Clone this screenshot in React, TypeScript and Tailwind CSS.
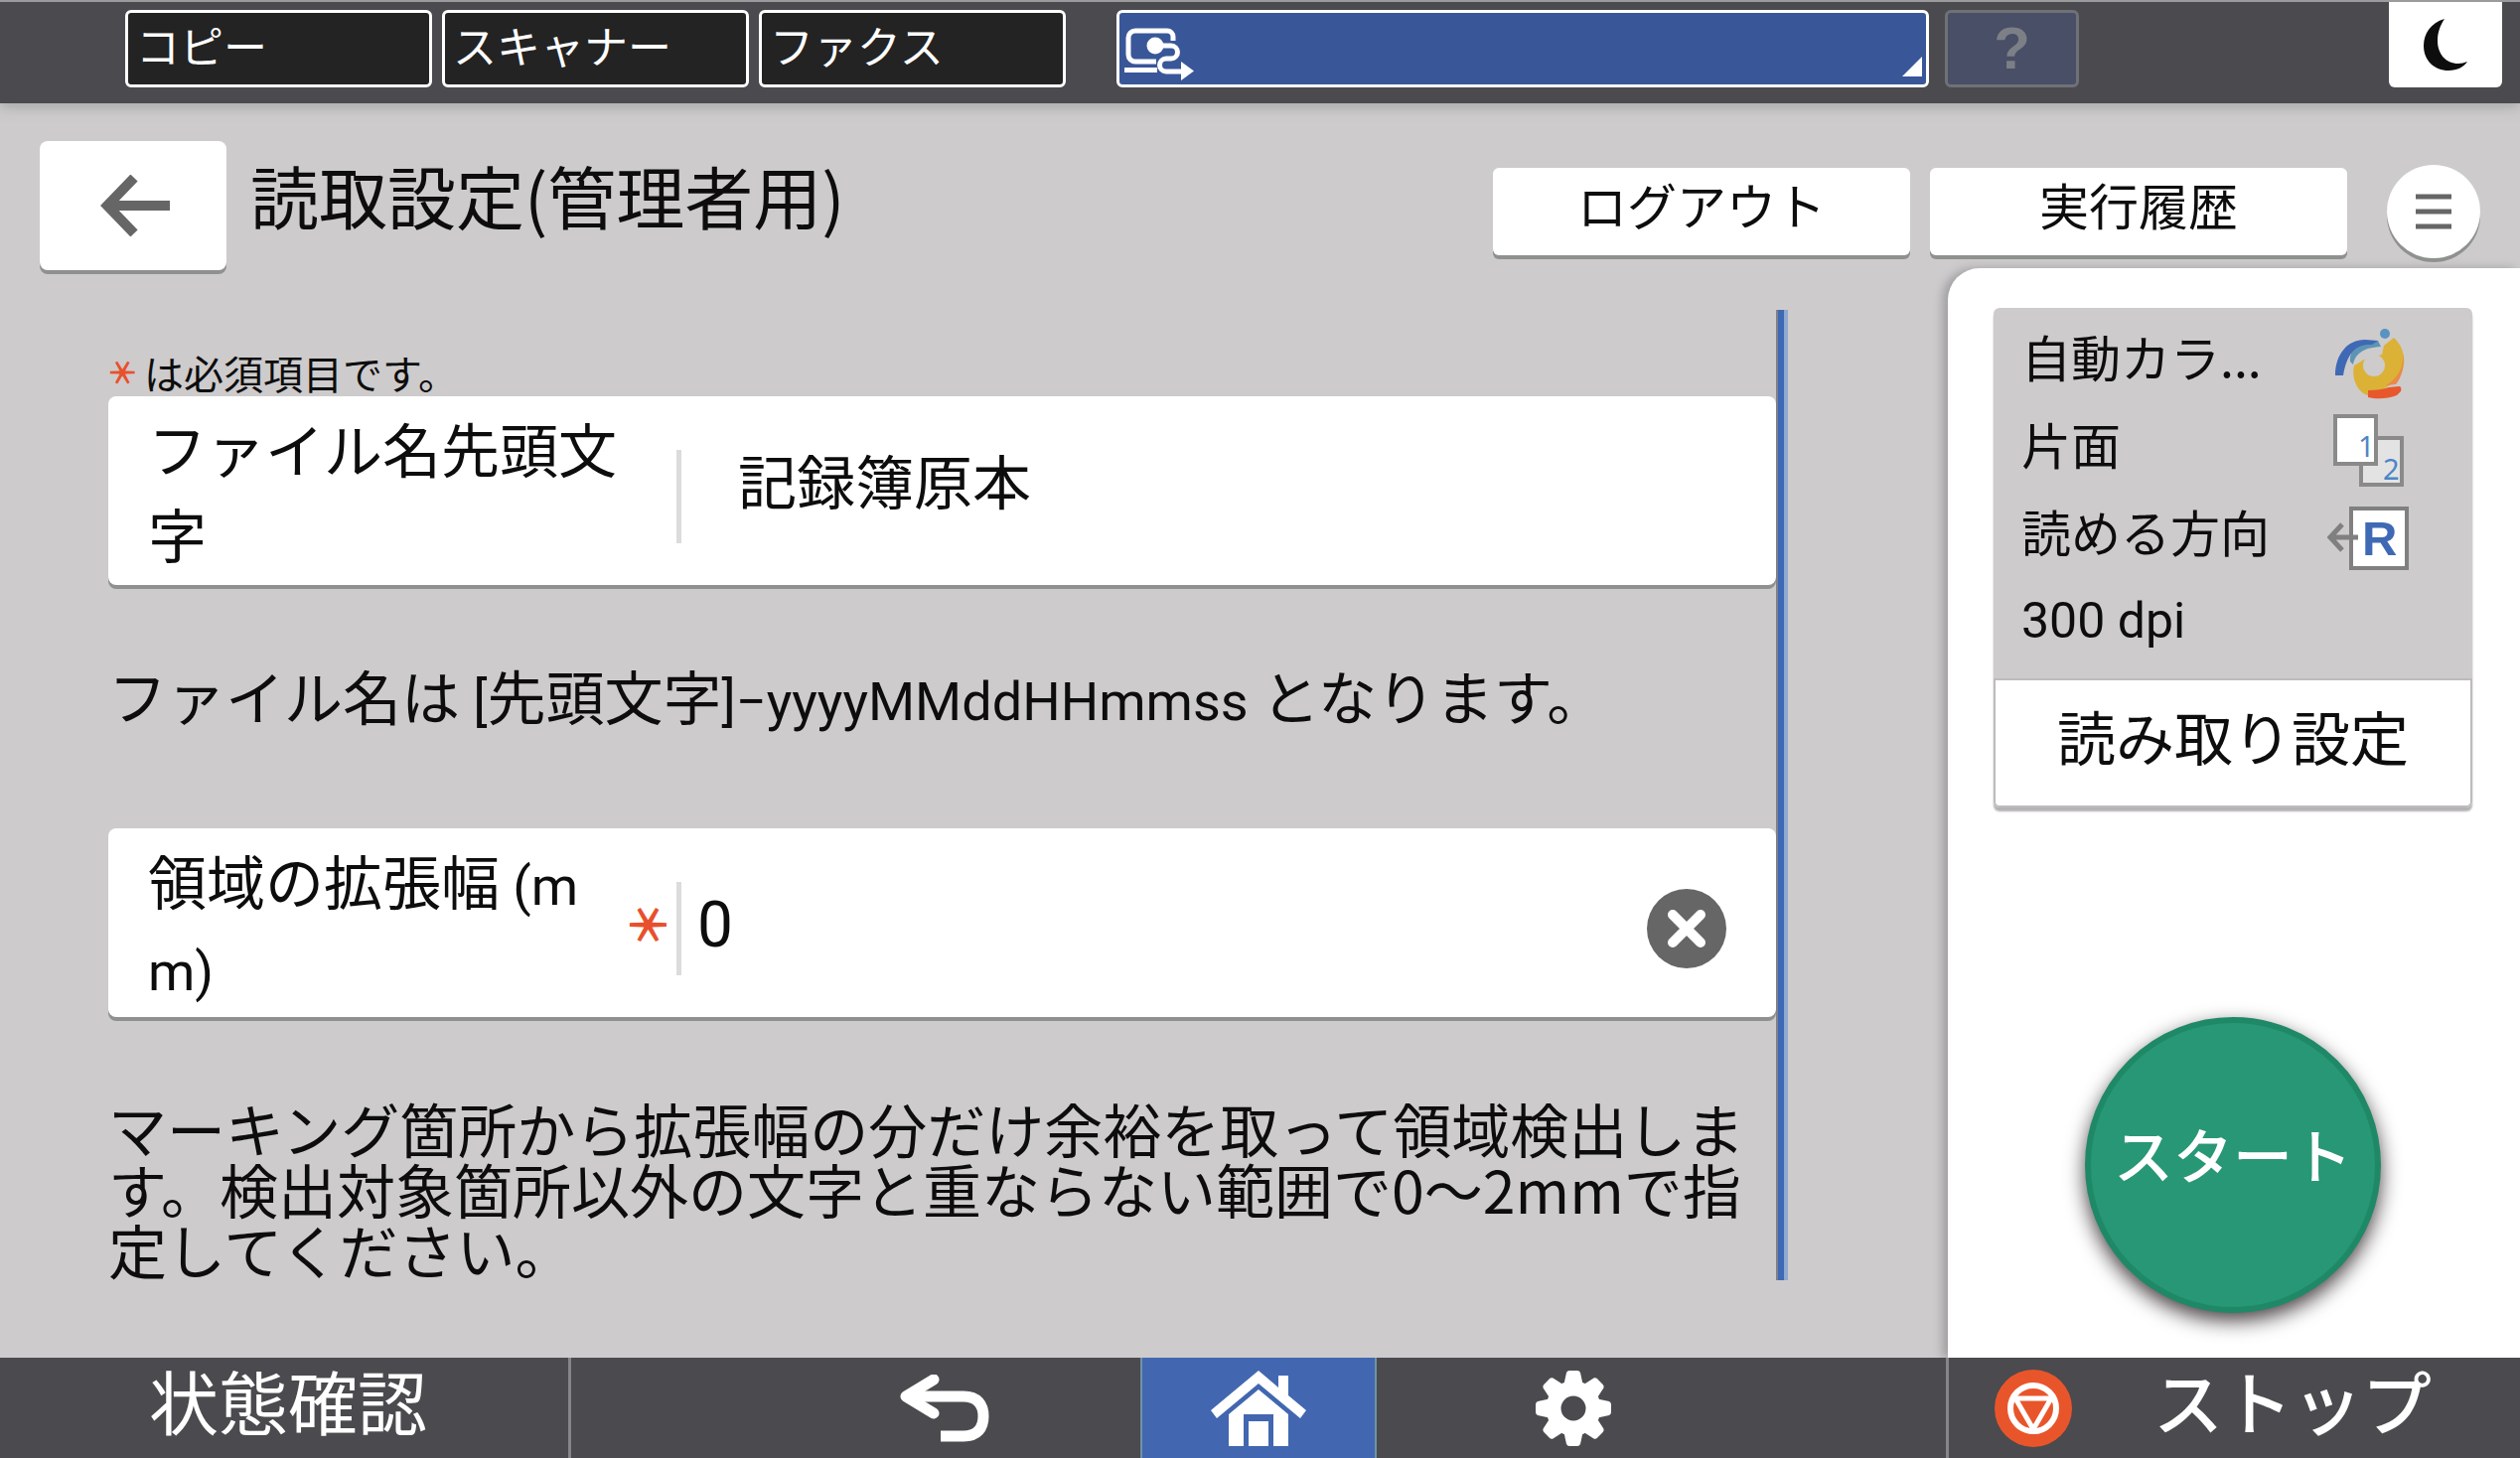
import type { ReactNode } from "react";

const cardShadow = "shadow-[0_4px_0_#8f918f]";

const Latin = ({ children }: { children: ReactNode }) => (
  <span className="font-[Roboto,sans-serif] text-[54px] leading-none">{children}</span>
);

const Required = () => <span className="inline-block rotate-90 font-bold text-[#e8502c]">＊</span>;

const ModeTab = ({ label }: { label: string }) => (
  <button className="h-[78px] w-[309px] rounded-md border-[3px] border-white bg-[#232323] px-2 pb-2 text-left text-[44px] leading-none text-white">
    {label}
  </button>
);

const AppIcon = () => (
  <svg width="72" height="56" viewBox="0 0 72 56" fill="none" stroke="#fff" strokeWidth="5">
    <path d="M50 14V10a6 6 0 0 0-6-6H12a7 7 0 0 0-7 7v17a7 7 0 0 0 7 7h21" />
    <path d="M1 43.500h33" />
    <path d="M32 19h16a6.500 6.500 0 0 1 0 13h-5a6 6 0 0 0 0 13h16" />
    <circle cx="32" cy="19" r="8.500" fill="#fff" stroke="none" />
    <path d="M58 35l13 9.500L58 54z" fill="#fff" stroke="none" />
  </svg>
);

const TopBar = () => (
  <header className="relative z-10 flex h-[104px] items-start border-t-2 border-[#9b9b9d] bg-[#4b4a4e] pr-[18px] pl-[126px] shadow-[0_4px_12px_#a8a8a8]">
    <nav className="flex gap-[10px] pt-2">
      <ModeTab label="コピー" />
      <ModeTab label="スキャナー" />
      <ModeTab label="ファクス" />
    </nav>
    <div className="ml-[51px] flex gap-4 pt-2">
      <button
        aria-label="実行中のアプリ"
        className="relative h-[78px] w-[818px] rounded-md border-[3px] border-white bg-[#395798] pt-3 pl-1"
      >
        <AppIcon />
        <svg className="absolute right-1 bottom-2" width="20" height="20" viewBox="0 0 20 20">
          <path d="M20 0v20H0z" fill="#fff" />
        </svg>
      </button>
      <button className="h-[78px] w-[135px] rounded-md border-[3px] border-[#707176] bg-[#484f66] font-['Liberation_Sans',sans-serif] text-[60px] leading-none font-bold text-[#7c7f86]">
        ?
      </button>
    </div>
    <button aria-label="スリープ" className="ml-auto flex h-[86px] w-[114px] items-center justify-center rounded-b-md bg-white">
      <svg width="46" height="54" viewBox="0 0 46 54">
        <path d="M22 1C8 5 1 16 1 28c0 15 11 25 25 25 9 0 16-4 19-9-3 1-6 2-9 2-13 0-21-10-21-23 0-9 3-16 7-22z" fill="#0d0d0d" />
      </svg>
    </button>
  </header>
);

const Toolbar = () => (
  <div className="flex h-[166px] items-start pr-10 pl-10">
    <button aria-label="戻る" className={`mt-[38px] flex h-[130px] w-[188px] items-center justify-center rounded-lg bg-white ${cardShadow}`}>
      <svg width="76" height="62" viewBox="0 0 76 62" fill="none" stroke="#666" strokeWidth="10">
        <path d="M10 31h65M39 3L12 31l27 28" />
      </svg>
    </button>
    <h1 className="mt-[42px] ml-6 text-[69px] leading-[100px]">読取設定(管理者用)</h1>
    <div className="mt-[65px] ml-auto flex gap-5">
      <button className={`h-[88px] w-[420px] rounded-md bg-white pb-4 text-[50px] leading-none ${cardShadow}`}>ログアウト</button>
      <button className={`h-[88px] w-[420px] rounded-md bg-white pb-4 text-[50px] leading-none ${cardShadow}`}>実行履歴</button>
    </div>
    <button aria-label="メニュー" className={`mt-[62px] ml-10 flex size-[94px] items-center justify-center rounded-full bg-white ${cardShadow}`}>
      <svg width="36" height="36" viewBox="0 0 36 36" stroke="#666" strokeWidth="5">
        <path d="M0 3h36M0 18h36M0 33h36" />
      </svg>
    </button>
  </div>
);

const Form = () => (
  <form className="min-w-0 flex-1 pt-[39px]">
    <p className="flex items-center text-[40px] leading-[48px]">
      <span className="w-[36px] text-[32px]">
        <Required />
      </span>
      は必須項目です。
    </p>

    <div className={`flex h-[190px] items-center rounded-lg bg-white pt-3 pl-10 ${cardShadow}`}>
      <label htmlFor="prefix" className="w-[532px] pb-3 text-[59px] leading-[86px]">
        ファイル名先頭文
        <br />字
      </label>
      <span className="h-[94px] w-[5px] bg-[#dcdcdc]" />
      <input
        id="prefix"
        defaultValue="記録簿原本"
        className="ml-[57px] h-[130px] min-w-0 flex-1 bg-transparent pb-9 text-[59px] outline-none"
      />
    </div>

    <p className="mt-20 h-[62px] text-[59px] leading-[62px] whitespace-nowrap">
      ファイル名は <Latin>[</Latin>先頭文字<Latin>]−yyyyMMddHHmmss</Latin> となります。
    </p>

    <div className={`mt-[103px] flex h-[190px] items-center rounded-lg bg-white pt-3 pr-[50px] pl-10 ${cardShadow}`}>
      <label htmlFor="margin" className="w-[482px] pb-3 text-[59px] leading-[86px]">
        領域の拡張幅 <Latin>(m</Latin>
        <br />
        <Latin>m)</Latin>
      </label>
      <span className="w-[50px] pb-2 text-[48px]">
        <Required />
      </span>
      <span className="h-[94px] w-[5px] bg-[#dcdcdc]" />
      <input
        id="margin"
        defaultValue="0"
        className="ml-4 h-[130px] min-w-0 flex-1 bg-transparent pb-2 font-[Roboto,sans-serif] text-[64px] outline-none"
      />
      <button type="button" aria-label="クリア">
        <svg width="80" height="80" viewBox="0 0 80 80">
          <circle cx="40" cy="40" r="40" fill="#666" />
          <path d="M26 26l28 28M54 26L26 54" stroke="#fff" strokeWidth="10" strokeLinecap="round" />
        </svg>
      </button>
    </div>

    <p className="mt-[81px] h-[183px] text-[59px] leading-[61px] whitespace-nowrap">
      マーキング箇所から拡張幅の分だけ余裕を取って領域検出しま
      <br />
      す。検出対象箇所以外の文字と重ならない範囲で0～2mmで指
      <br />
      定してください。
    </p>
  </form>
);

const ColorIcon = () => (
  <svg width="72" height="76" viewBox="18 16 72 76">
    <path d="M79 28c13 12 13 31 4 41-4 5-9 8-16 11l-15 6c-10-4-16-17-13-30l10-6 18-5 2-9z" fill="#dbb236" />
    <path d="M53 81c8 0 15-1 21-3l10-1c2 0 3 2 2 5l-4 4c-10 4-21 4-29 2z" fill="#e8582c" />
    <path d="M88 44c1 14-5 25-17 32l10-1c6-7 9-19 7-31z" fill="#e88a4a" />
    <path d="M38 55c2-10 9-17 28-18l-3-6H44c-5 5-10 14-9 21z" fill="#5d94b5" />
    <path d="M20 66c0-21 12-36 30-36l13 1-6 4c-16-1-25 8-29 31z" fill="#3f69b4" />
    <circle cx="59" cy="56" r="11" fill="#cdcbcc" />
    <circle cx="70" cy="24" r="5" fill="#5a93bf" />
  </svg>
);

const SideIcon = () => (
  <svg width="72" height="74" viewBox="0 0 72 74" strokeWidth="4">
    <rect x="28" y="24" width="41" height="47" fill="#e3e3e4" stroke="#8a8a8a" />
    <rect x="2" y="2" width="41" height="48" fill="#fff" stroke="#8a8a8a" />
    <text x="25" y="43" fontSize="29" fill="#4d86c6" fontFamily="Noto Sans">1</text>
    <text x="50" y="66" fontSize="29" fill="#4d86c6" fontFamily="Noto Sans">2</text>
  </svg>
);

const DirectionIcon = () => (
  <svg width="84" height="64" viewBox="0 0 84 64" fill="none" stroke="#808080" strokeWidth="4">
    <rect x="24" y="2" width="56" height="60" fill="#fff" />
    <path d="M31 31H3M15 18L3 31l12 13" strokeWidth="5" />
    <text x="35" y="49" fontSize="49" fontWeight="700" fill="#3f69b4" stroke="none" fontFamily="Liberation Sans">R</text>
  </svg>
);

const InfoRow = ({ label, icon }: { label: ReactNode; icon?: ReactNode }) => (
  <li className="flex h-[88px] items-center justify-between">
    <span className="pb-3">{label}</span>
    <span className="flex w-[84px] justify-center pt-1">{icon}</span>
  </li>
);

const Sidebar = () => (
  <aside className="flex w-[576px] flex-none flex-col rounded-tl-[32px] bg-white pt-10 pr-12 pb-[45px] pl-[46px] shadow-[-6px_0_8px_#a3a1a4]">
    <div className="rounded-md shadow-[0_4px_2px_#b4b2b4]">
      <ul className="h-[373px] rounded-t-md bg-[#cdcbcc] pt-[10px] pr-[62px] pl-7 text-[50px] leading-[70px]">
        <InfoRow label="自動カラ..." icon={<ColorIcon />} />
        <InfoRow label="片面" icon={<SideIcon />} />
        <InfoRow label="読める方向" icon={<DirectionIcon />} />
        <InfoRow label={<span className="font-[Roboto,sans-serif]">300 dpi</span>} />
      </ul>
      <button className="h-[130px] w-full rounded-b-md border-2 border-[#bdbbbd] bg-white pb-4 text-[59px] leading-none">
        読み取り設定
      </button>
    </div>
    <button className="mt-auto size-[298px] self-center rounded-full border-[6px] border-[#1f8967] bg-[#289776] pb-6 text-[60px] leading-none font-medium text-white shadow-[0_8px_20px_#4b4447]">
      スタート
    </button>
  </aside>
);

const BottomBar = () => (
  <footer className="flex h-[101px] bg-[#4b4a4e] text-[70px] leading-none text-white">
    <button className="w-[575px] flex-none border-r-[3px] border-[#86868a] pb-4 pl-2">状態確認</button>
    <button aria-label="戻る" className="flex flex-1 items-center justify-end pr-[152px]">
      <svg width="90" height="68" viewBox="0 0 90 68" fill="none" stroke="#fff" strokeWidth="11">
        <path d="M10 22h54c14 0 20 8 20 20s-6 20-20 20H41" />
        <path d="M34 5L6 22l28 17" strokeLinecap="round" strokeLinejoin="round" />
      </svg>
    </button>
    <button aria-label="ホーム" className="flex w-[238px] flex-none items-center justify-center border-x-2 border-[#6f93a8] bg-[#4267b0]">
      <svg width="96" height="76" viewBox="0 0 96 76" fill="#fff">
        <path d="M48 0l20 17V5h10v20l18 15-6 8-42-35L6 48l-6-8z" />
        <path d="M48 19l30 25v32H63V44H33v32H18V44z" />
        <path d="M38 51h20v25H38z" />
      </svg>
    </button>
    <button aria-label="設定" className="flex w-[573px] flex-none items-center pl-[160px]">
      <svg width="76" height="76" viewBox="-38 -38 76 76" fill="#fff">
        {[0, 45, 90, 135, 180, 225, 270, 315].map((angle) => (
          <path key={angle} d="M-10-22L-7-36q1-2 3-2h8q2 0 3 2l3 14z" transform={`rotate(${angle})`} />
        ))}
        <circle r="20" fill="none" stroke="#fff" strokeWidth="15" />
      </svg>
    </button>
    <button className="flex w-[578px] flex-none items-center border-l-[3px] border-[#86868a] pl-[46px] font-medium">
      <svg width="78" height="78" viewBox="0 0 78 78" fill="none" stroke="#fff" strokeWidth="6">
        <circle cx="39" cy="39" r="39" fill="#e9552b" stroke="none" />
        <circle cx="39" cy="39" r="23" />
        <path d="M21 29h36L39 60z" strokeWidth="5" />
      </svg>
      <span className="ml-[82px] pb-4">ストップ</span>
    </button>
  </footer>
);

const App = () => {
  return (
    <div className="flex min-h-screen w-full flex-col bg-[#cdcbcc] font-['Noto_Sans_CJK_JP',sans-serif] text-[#0d0d0d]">
      <TopBar />
      <Toolbar />
      <div className="flex flex-1">
        <main className="flex min-w-0 flex-1 pt-[42px] pr-[161px] pb-[78px] pl-[109px]">
          <Form />
          <div className="w-3 flex-none border-r-4 border-l-2 border-r-[#8fa9cf] border-l-[#7d8088] bg-[#3f69b4]" />
        </main>
        <Sidebar />
      </div>
      <BottomBar />
    </div>
  );
};

export default App;
